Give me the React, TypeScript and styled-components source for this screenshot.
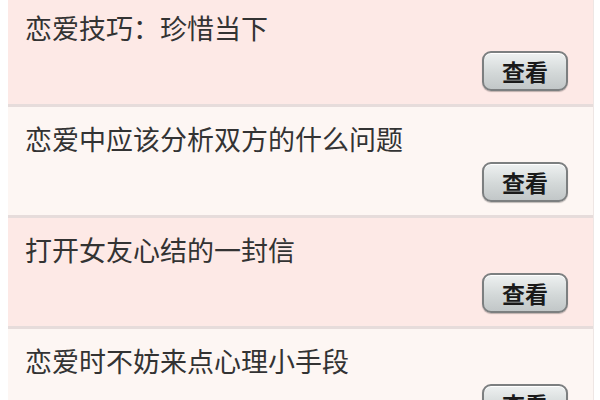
import React from 'react'
import styled, { createGlobalStyle } from 'styled-components'

const GlobalStyle = createGlobalStyle`
  html, body {
    margin: 0;
    padding: 0;
    background: #ffffff;
    overflow: hidden;
  }
  body {
    font-family: "Noto Sans CJK SC", "Noto Sans", sans-serif;
  }
`

const Page = styled.div`
  width: 600px;
  height: 400px;
  overflow: hidden;
  background: #ffffff;
`

const List = styled.div`
  display: flex;
  flex-direction: column;
  margin: -4px 0 0 8px;
  width: 585px;
  border-right: 1px solid #eee6e4;
`

const Item = styled.div<{ $alt: boolean }>`
  display: flex;
  flex-direction: column;
  flex-shrink: 0;
  height: 111px;
  padding: 16px 25px 0 17px;
  box-sizing: border-box;
  background: ${({ $alt }) => ($alt ? '#fdf6f3' : '#fde9e6')};
  border-bottom: 3px solid #e6dcdb;
`

const Title = styled.div`
  font-size: 27px;
  line-height: 32px;
  color: #333333;
  white-space: nowrap;
`

const ViewButton = styled.button`
  align-self: flex-end;
  margin-top: 7px;
  width: 86px;
  height: 40px;
  border: 2px solid #7c7f80;
  border-radius: 9px;
  background: linear-gradient(#eef1f1, #d3d8d8 55%, #c2c7c8);
  box-shadow: inset 0 1px 0 #ffffff, 0 1px 1px rgba(0, 0, 0, 0.25);
  font-family: "Noto Sans CJK SC", "Noto Sans", sans-serif;
  font-size: 23px;
  font-weight: 700;
  color: #1a1a1a;
  line-height: 1;
  padding: 0;
  cursor: pointer;
`

const items = [
  '恋爱技巧：珍惜当下',
  '恋爱中应该分析双方的什么问题',
  '打开女友心结的一封信',
  '恋爱时不妨来点心理小手段',
]

export default function App() {
  return (
    <Page>
      <GlobalStyle />
      <List>
        {items.map((title, i) => (
          <Item key={title} $alt={i % 2 === 1}>
            <Title>{title}</Title>
            <ViewButton>查看</ViewButton>
          </Item>
        ))}
      </List>
    </Page>
  )
}
